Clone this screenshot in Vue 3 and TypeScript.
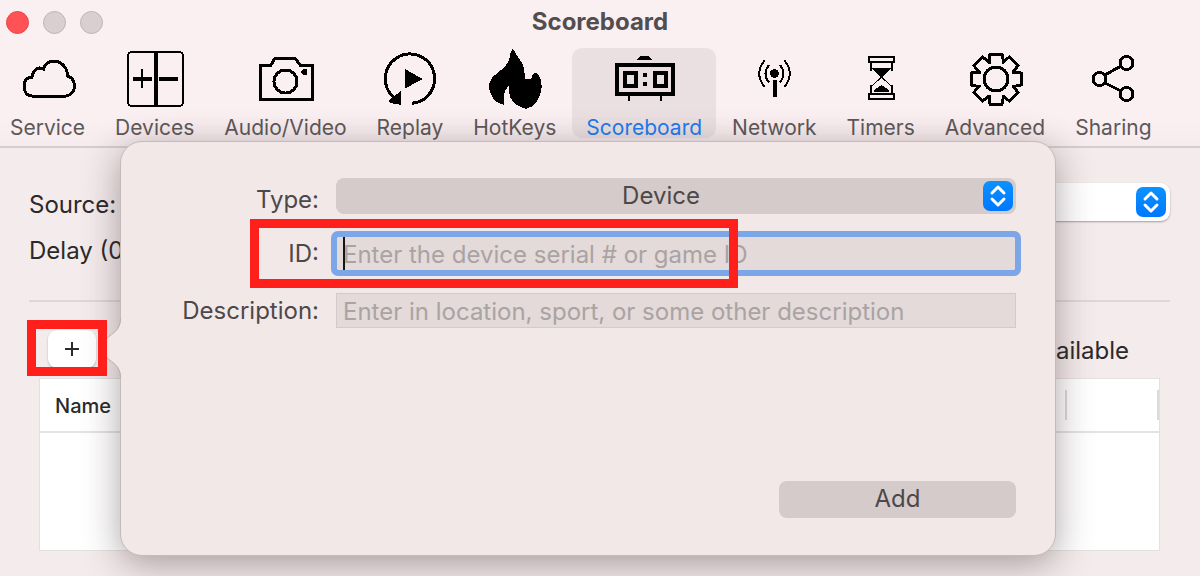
<script setup lang="ts">
import { ref } from 'vue'

interface Tab {
  id: string
  label: string
}

const tabs: Tab[] = [
  { id: 'service', label: 'Service' },
  { id: 'devices', label: 'Devices' },
  { id: 'av', label: 'Audio/Video' },
  { id: 'replay', label: 'Replay' },
  { id: 'hotkeys', label: 'HotKeys' },
  { id: 'scoreboard', label: 'Scoreboard' },
  { id: 'network', label: 'Network' },
  { id: 'timers', label: 'Timers' },
  { id: 'advanced', label: 'Advanced' },
  { id: 'sharing', label: 'Sharing' },
]

const active = ref('scoreboard')
const deviceId = ref('')
const description = ref('')

// Outline of an eight-toothed gear centred on (cx, cy)
function gearPath(cx: number, cy: number): string {
  const profile = [[-7, -17], [-7, -20], [-6, -25], [6, -25], [7, -20], [7, -17]]
  const points: string[] = []
  for (let tooth = 0; tooth < 8; tooth++) {
    const a = (tooth * Math.PI) / 4
    for (const [x, y] of profile) {
      const px = cx + x * Math.cos(a) - y * Math.sin(a)
      const py = cy + x * Math.sin(a) + y * Math.cos(a)
      points.push(`${px.toFixed(1)} ${py.toFixed(1)}`)
    }
  }
  return `M${points.join('L')}Z`
}

const gear = gearPath(31, 31)
</script>

<template>
  <div class="window">
    <header class="header">
      <div class="titlebar">
        <div class="lights">
          <button class="light close" type="button" aria-label="Close"></button>
          <button class="light" type="button" aria-label="Minimize"></button>
          <button class="light" type="button" aria-label="Zoom"></button>
        </div>
        <h1 class="title">Scoreboard</h1>
      </div>

      <nav class="toolbar">
        <button
          v-for="tab in tabs"
          :key="tab.id"
          type="button"
          class="tab"
          :class="{ selected: tab.id === active }"
          @click="active = tab.id"
        >
          <svg class="icon" viewBox="0 0 60 60" aria-hidden="true">
            <g v-if="tab.id === 'service'" class="line">
              <path d="M14 48H48C54 47 57 42 56.5 37C56 32 53 29 49.5 28C50 20 43 13 36 13C31 13 27 16 25.5 21C20 18 15 22 14 29C9 29 6 33 6 38C6 44 9 48 14 48Z" />
            </g>
            <g v-else-if="tab.id === 'devices'">
              <rect class="thin" x="3" y="4" width="55" height="54" rx="4" />
              <path d="M29 4h4v54h-4zM8 29h19v4H8zM16 21h2v19h-2zM34 29h19v4H34z" />
            </g>
            <g v-else-if="tab.id === 'av'">
              <path class="line" d="M5 17H16L20 10H40L45 17H57V51H5Z" />
              <circle class="line" cx="30.5" cy="33.5" r="11.5" />
              <path d="M45 24l3-3h4v6h-4z" />
            </g>
            <g v-else-if="tab.id === 'replay'">
              <path class="line" d="M32 55.3A24.7 24.7 0 1 0 14 49.5" />
              <path d="M20.500 43L17 46L8 53L10 55L21.500 57ZM25 21L42.500 31L25 40.500Z" />
            </g>
            <path
              v-else-if="tab.id === 'hotkeys'"
              d="M27.700 0.500L35 12Q39.500 18 39.500 25V30.500H46.500L48 26L50.700 24.700L54 27Q57 34 56.700 39Q56 50 47.700 58L41 61L33.300 58Q25.500 53 24.500 46L24 38Q19 42 19 48V56.700Q12 56 8 50Q4 44 4 37Q5 31 10 27L20 18.700Q25 12 25.500 5Z"
            />
            <g v-else-if="tab.id === 'scoreboard'">
              <path d="M23 12l3-4h9l3 4z" />
              <path d="M1 15h60v33H1zM5 19v25h52V19z" fill-rule="evenodd" />
              <path d="M9 23h15v17H9zM13 27v9h7v-9zM39 23h15v17H39zM43 27v9h7v-9z" fill-rule="evenodd" />
              <path d="M29 25h4v4h-4zM29 34h4v4h-4zM14 48h2v5h-2zM46 48h2v5h-2z" />
            </g>
            <g v-else-if="tab.id === 'network'">
              <circle cx="30.5" cy="25.5" r="4.5" />
              <path d="M29 32h4v17h-4z" />
              <path class="thin" d="M25 17Q18 25.500 25 34.500M20.500 12.500Q10 25.500 20.500 39M36 17Q43 25.500 36 34.500M40.500 12.500Q51 25.500 40.500 39" />
            </g>
            <g v-else-if="tab.id === 'timers'">
              <path class="thin" d="M18 9H43V14H18ZM18 46H43V51H18ZM20 14V23M41 14V23M20 37V46M41 37V46" />
              <path class="hair" d="M21 20L40 38M40 20L21 38" />
              <path d="M22 20H39L30.500 29ZM23 44V42L30.500 37L38 42V44Z" />
            </g>
            <g v-else-if="tab.id === 'advanced'" class="line">
              <path :d="gear" />
              <circle cx="31" cy="31" r="12" />
            </g>
            <g v-else class="line">
              <circle cx="16.5" cy="31" r="6.5" />
              <circle cx="43.5" cy="15" r="6.5" />
              <circle cx="43.5" cy="46" r="6.5" />
              <path d="M22 27L38 18M22 35L38 43M22 26V36" />
            </g>
          </svg>
          <span>{{ tab.label }}</span>
        </button>
      </nav>
    </header>

    <main class="content">
      <div class="setting">
        <label for="source">Source:</label>
        <div class="picker light-picker">
          <select id="source"></select>
          <svg class="chevrons" viewBox="0 0 30 30" aria-hidden="true">
            <path d="M9 12L15 6L21 12M9 18L15 24L21 18" />
          </svg>
        </div>
      </div>
      <div class="setting">Delay (0</div>
      <hr class="divider" />

      <div class="list-bar">
        <button class="plus" type="button" aria-label="Add source">
          <svg viewBox="0 0 14 14" aria-hidden="true"><path d="M7 0V14M0 7H14" /></svg>
        </button>
        <span class="available">Available</span>
      </div>

      <table class="sources">
        <thead>
          <tr>
            <th scope="col">Name</th>
            <th class="tail" scope="col"></th>
          </tr>
        </thead>
        <tbody>
          <tr>
            <td colspan="2"></td>
          </tr>
        </tbody>
      </table>
    </main>

    <form class="popover" @submit.prevent>
      <svg class="arrow" viewBox="0 0 24 60" aria-hidden="true">
        <path class="arrow-fill" d="M24 0H23C23 12 16 14 8 21Q-5 30 8 39C16 46 23 48 23 60H24Z" />
        <path class="arrow-edge" d="M22.500 0C22.500 12 16 14 8 21Q-5 30 8 39C16 46 22.500 48 22.500 60" />
      </svg>
      <div class="field">
        <label class="type-label" for="type">Type:</label>
        <div class="picker">
          <select id="type">
            <option>Device</option>
          </select>
          <svg class="chevrons" viewBox="0 0 30 30" aria-hidden="true">
            <path d="M9 12L15 6L21 12M9 18L15 24L21 18" />
          </svg>
        </div>
      </div>
      <div class="field">
        <label for="device-id">ID:</label>
        <div class="entry focused">
          <input id="device-id" v-model="deviceId" type="text" placeholder="Enter the device serial # or game ID" />
          <i class="caret"></i>
        </div>
        <div class="mark id-mark"></div>
      </div>
      <div class="field">
        <label for="description">Description:</label>
        <div class="entry">
          <input
            id="description"
            v-model="description"
            type="text"
            placeholder="Enter in location, sport, or some other description"
          />
        </div>
      </div>
      <button class="submit" type="submit">Add</button>
    </form>

    <div class="mark add-mark"></div>
  </div>
</template>

<style>
body {
  margin: 0;
}
</style>

<style scoped>
.window {
  position: relative;
  display: flex;
  flex-direction: column;
  min-height: 100vh;
  overflow: hidden;
  background: #f4ebec;
  color: #2b292a;
  font-family: Inter, "Liberation Sans", sans-serif;
  font-size: 24px;
  line-height: 28px;
}

.window * {
  box-sizing: border-box;
}

button,
input,
select {
  margin: 0;
  padding: 0;
  border: 0;
  background: none;
  color: inherit;
  font: inherit;
}

.header {
  background: linear-gradient(#faeff1 0, #faeff1 80%, #f6ebed 100%);
  border-bottom: 2px solid #d6cdce;
}

.titlebar {
  position: relative;
  display: flex;
  align-items: center;
  justify-content: center;
  height: 44px;
}

.lights {
  position: absolute;
  left: 6px;
  display: flex;
  gap: 14px;
}

.light {
  width: 23px;
  height: 23px;
  border: 1px solid #bfb5b7;
  border-radius: 50%;
  background: #d9cfd1;
}

.close {
  border-color: #e8474b;
  background: #ff5257;
}

.title {
  margin: 0;
  color: #524d4e;
  font-size: 24px;
  font-weight: 700;
}

.toolbar {
  display: flex;
  gap: 30px;
  padding: 4px 10px 8px;
}

.tab {
  display: flex;
  flex-direction: column;
  align-items: center;
  height: 90px;
  color: #5d5859;
  font-size: 21px;
  line-height: 24px;
}

.tab span {
  margin-top: 8px;
}

.selected {
  margin: 0 -14px;
  padding: 0 14px;
  border-radius: 10px;
  background: #eae0e1;
  color: #1c7bf2;
}

.icon {
  width: 60px;
  height: 60px;
  overflow: visible;
  fill: #000;
  shape-rendering: crispEdges;
}

.line {
  fill: none;
  stroke: #000;
  stroke-width: 3;
}

.thin {
  fill: none;
  stroke: #000;
  stroke-width: 2;
}

.hair {
  fill: none;
  stroke: #000;
  stroke-width: 1;
}

.content {
  display: flex;
  flex: 1;
  flex-direction: column;
  padding: 34px 30px 25px 29px;
}

.setting {
  display: flex;
  align-items: center;
  gap: 16px;
  height: 46px;
}

.picker {
  position: relative;
  flex: 1;
  height: 36px;
  border-radius: 8px;
  background: #d5cbca;
}

.picker select {
  width: 100%;
  height: 100%;
  padding-right: 30px;
  appearance: none;
  text-align: center;
  text-align-last: center;
}

.chevrons {
  position: absolute;
  top: 3px;
  right: 3px;
  width: 30px;
  height: 30px;
  border-radius: 7px;
  background: linear-gradient(#0c92ff, #0077ff);
  fill: none;
  stroke: #fff;
  stroke-width: 3;
  stroke-linecap: round;
  stroke-linejoin: round;
  pointer-events: none;
}

.light-picker {
  height: 38px;
  margin-bottom: 6px;
  border-radius: 9px;
  background: #fff;
  box-shadow: 0 1px 2px #a59b9c;
}

.light-picker .chevrons {
  top: 4px;
  right: 4px;
}

.divider {
  width: 100%;
  height: 2px;
  margin: 26px 0 28px;
  border: 0;
  background: #dfd6d7;
}

.list-bar {
  display: flex;
  align-items: center;
  justify-content: space-between;
  padding: 0 41px 0 19px;
}

.available {
  padding-top: 4px;
}

.plus {
  display: grid;
  place-items: center;
  width: 48px;
  height: 38px;
  border-radius: 9px;
  background: #fff;
  box-shadow: 0 1px 2px #b5abac;
}

.plus svg {
  width: 14px;
  height: 14px;
  stroke: #2b292a;
  stroke-width: 2;
}

.sources {
  flex: 1;
  display: flex;
  flex-direction: column;
  margin: 10px 10px 0;
  border: 1px solid #e3e0e0;
  background: #fff;
  font-size: 20px;
}

.sources tr {
  display: flex;
  align-items: center;
  height: 54px;
  border-bottom: 2px solid #e4e3e3;
}

.sources tbody tr {
  border: 0;
}

.sources th {
  flex: 1;
  padding: 2px 15px 0;
  font-weight: 500;
  text-align: left;
}

.sources .tail {
  flex: none;
  width: 94px;
  height: 30px;
  padding: 0;
  border: solid #dcdada;
  border-width: 0 2px;
}

.popover {
  position: absolute;
  inset: 141px 12% 20px 10%;
  display: flex;
  flex-direction: column;
  gap: 22px;
  padding: 36px 39px 37px;
  border: 1px solid #c4bbbb;
  border-radius: 22px;
  background: #f2e8e7;
  box-shadow: 0 8px 36px rgba(60, 40, 45, 0.42);
  color: #4d4849;
}

.arrow {
  position: absolute;
  top: 176px;
  left: -23px;
  width: 24px;
  height: 60px;
}

.arrow-fill {
  fill: #f2e8e7;
}

.arrow-edge {
  fill: none;
  stroke: #b9b0b0;
  stroke-width: 1;
}

.field {
  position: relative;
  display: flex;
  align-items: center;
  gap: 17px;
}

.field label {
  width: 159px;
  text-align: right;
}

.field .type-label {
  padding-top: 8px;
}

.entry {
  position: relative;
  flex: 1;
  height: 35px;
}

.entry input {
  display: block;
  width: 100%;
  height: 100%;
  padding: 2px 6px 0;
  border: 1px solid #d3cac9;
  background: #e3dad9;
}

.entry input::placeholder {
  color: #aaa3a3;
  opacity: 1;
}

.focused input {
  border-color: #a49fa6;
  outline: 6px solid #7ba6e8;
  outline-offset: -1px;
  border-radius: 2px;
}

.caret {
  position: absolute;
  top: 1px;
  bottom: 1px;
  left: 7px;
  width: 2px;
  background: #161415;
}

.submit {
  align-self: flex-end;
  width: 237px;
  height: 37px;
  margin-top: auto;
  padding-bottom: 2px;
  border-radius: 8px;
  background: #d5cbca;
}

.mark {
  position: absolute;
  border: 9px solid #ff201c;
  pointer-events: none;
}

.id-mark {
  inset: -17px 278px -17px 90px;
}

.add-mark {
  top: 320px;
  left: 27px;
  width: 80px;
  height: 56px;
}
</style>
